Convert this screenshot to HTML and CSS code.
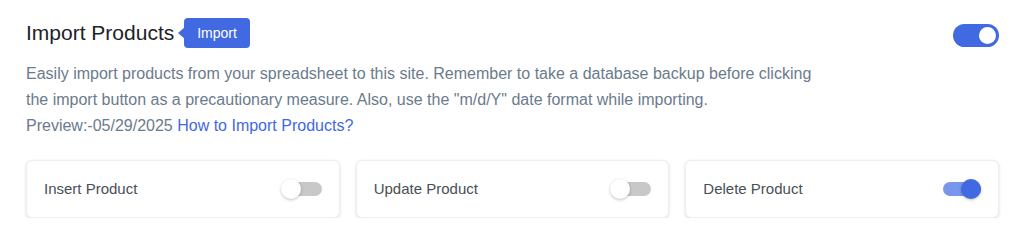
FILE: index.html
```html
<!DOCTYPE html>
<html>
<head>
<meta charset="utf-8">
<link rel="stylesheet" href="styles.css">
</head>
<body>
<div class="panel">
  <div class="head">
    <div class="title-wrap">
      <h2 class="title">Import Products</h2>
      <span class="badge">Import</span>
    </div>
    <span class="switch switch-main on"><span class="knob"></span></span>
  </div>
  <p class="desc">Easily import products from your spreadsheet to this site. Remember to take a database backup before clicking the import button as a precautionary measure. Also, use the "m/d/Y" date format while importing.<br>Preview:-05/29/2025 <a class="link" href="#">How to Import Products?</a></p>
  <div class="cards">
    <div class="card">
      <span class="label">Insert Product</span>
      <span class="mswitch"><span class="track"></span><span class="thumb"></span></span>
    </div>
    <div class="card">
      <span class="label">Update Product</span>
      <span class="mswitch"><span class="track"></span><span class="thumb"></span></span>
    </div>
    <div class="card">
      <span class="label">Delete Product</span>
      <span class="mswitch checked"><span class="track"></span><span class="thumb"></span></span>
    </div>
  </div>
</div>
</body>
</html>
```
FILE: styles.css
```css
* { box-sizing: border-box; }
html, body { margin: 0; padding: 0; background: #fff; }
body { font-family: "Liberation Sans", Arial, sans-serif; }
.panel { padding: 18px 25px 0 26px; }
.head { display: flex; align-items: center; justify-content: space-between; height: 30px; }
.title-wrap { display: flex; align-items: center; }
.title { margin: 0; font-size: 21px; font-weight: 400; color: #1d2327; line-height: 30px; }
.badge {
  position: relative;
  margin-left: 10px;
  height: 30px;
  padding: 0 13px;
  background: #4169e1;
  color: #fff;
  font-size: 14px;
  line-height: 30px;
  border-radius: 4px;
}
.badge::before {
  content: "";
  position: absolute;
  left: -6px;
  top: 9px;
  border-top: 6px solid transparent;
  border-bottom: 6px solid transparent;
  border-right: 7px solid #4169e1;
}
.switch-main {
  display: inline-flex;
  align-items: center;
  width: 46px;
  height: 23px;
  border-radius: 12px;
  background: #4169e1;
  padding: 3px;
  margin-top: 5px;
  justify-content: flex-end;
}
.switch-main .knob { width: 17px; height: 17px; border-radius: 50%; background: #fff; }
.desc {
  margin: 13px 0 0;
  max-width: 800px;
  font-size: 16px;
  line-height: 26px;
  color: #6b7b8c;
}
.link { color: #4169e1; text-decoration: none; }
.cards {
  display: grid;
  grid-template-columns: repeat(3, 1fr);
  gap: 16px;
  margin-top: 21px;
}
.card {
  display: flex;
  align-items: center;
  justify-content: space-between;
  height: 58px;
  padding: 0 17px 1px 17px;
  border: 1px solid #eceef1;
  border-radius: 6px;
  background: #fff;
  box-shadow: 0 1px 3px rgba(30, 40, 60, 0.16);
}
.label { font-size: 15px; color: #474f58; }
.mswitch { position: relative; width: 41px; height: 20px; display: inline-block; }
.mswitch .track {
  position: absolute; left: 3px; right: 0; top: 3px; height: 14px;
  border-radius: 7px; background: #c8c8c8;
}
.mswitch .thumb {
  position: absolute; left: 0; top: 0; width: 20px; height: 20px; border-radius: 50%;
  background: #fff; box-shadow: 0 1px 3px rgba(0, 0, 0, 0.25);
}
.mswitch.checked .track { background: #7a96ec; }
.mswitch.checked .thumb { left: auto; right: 0; background: #4169e1; }
```
